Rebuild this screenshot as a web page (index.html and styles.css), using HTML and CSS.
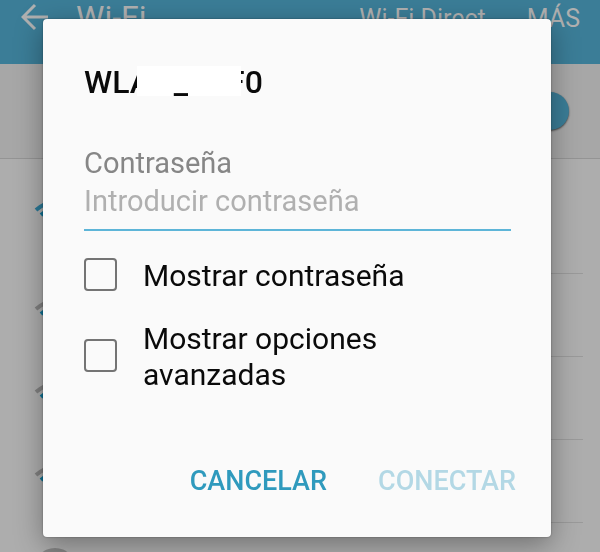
FILE: index.html
```html
<!DOCTYPE html>
<html lang="es">
<head>
    <meta charset="UTF-8">
    <meta name="viewport" content="width=device-width, initial-scale=1.0">
    <title>Wi-Fi</title>
    <link rel="stylesheet" href="styles.css">
</head>
<body>

<svg class="symbols" width="0" height="0">
    <symbol id="wifi" viewBox="0 0 42 34">
        <path class="wave-outer" d="M2 10 Q21 -6 40 10" />
        <path class="wave-inner" d="M7 15 Q21 3 35 15 M13 21 Q21 14 29 21" />
        <path class="wave-dot" d="M16 25 L21 31 L26 25 Q21 21 16 25 Z" />
    </symbol>
</svg>

<header class="topbar">
    <button class="back" aria-label="Atrás">
        <svg width="28" height="28" viewBox="0 0 28 28">
            <path d="M27 14 H3 M14 2 L2 14 L14 26" fill="none" stroke="currentColor" stroke-width="3" />
        </svg>
    </button>
    <h1>Wi-Fi</h1>
    <button class="action">Wi-Fi Direct</button>
    <button class="action">MÁS</button>
</header>

<div class="switch-row">
    <input type="checkbox" class="switch" aria-label="Wi-Fi" checked>
</div>

<ul class="networks">
    <li class="network strong connected"><svg width="42" height="34"><use href="#wifi" /></svg><span class="info"></span></li>
    <li class="network"><svg width="42" height="34"><use href="#wifi" /></svg><span class="info"></span></li>
    <li class="network"><svg width="42" height="34"><use href="#wifi" /></svg><span class="info"></span></li>
    <li class="network"><svg width="42" height="34"><use href="#wifi" /></svg><span class="info"></span></li>
    <li class="network"><span class="add"></span></li>
</ul>

<div class="overlay">
    <form class="dialog" role="dialog" aria-labelledby="ssid">
        <h2 class="ssid" id="ssid">
            <span>WLAN<span class="underscore">_</span></span>
            <span>F0</span>
            <span class="redacted"></span>
        </h2>

        <label class="field-label" for="password">Contraseña</label>
        <input class="field" type="password" id="password" placeholder="Introducir contraseña">

        <div class="option">
            <input type="checkbox" id="showPassword">
            <label for="showPassword">Mostrar contraseña</label>
        </div>
        <div class="option">
            <input type="checkbox" id="showAdvanced">
            <label for="showAdvanced">Mostrar opciones avanzadas</label>
        </div>

        <div class="buttons">
            <button type="button">CANCELAR</button>
            <button type="submit" disabled>CONECTAR</button>
        </div>
    </form>
</div>

</body>
</html>
```

FILE: styles.css
```css
* {
    box-sizing: border-box;
}

body {
    display: flex;
    flex-direction: column;
    margin: 0;
    height: 100vh;
    overflow: hidden;
    font-family: Roboto, sans-serif;
    background-color: #adadad;
}

h1, h2, ul {
    margin: 0;
    padding: 0;
}

button {
    padding: 0;
    border: none;
    background: none;
    font-family: inherit;
    cursor: pointer;
}

.symbols {
    position: absolute;
}

/* screen behind the dialog */
.topbar {
    flex: none;
    display: flex;
    align-items: flex-start;
    height: 64px;
    padding: 2px 20px 0 21px;
    background-color: #3b7d97;
    color: #b0b0b0;
}

.back {
    height: 30px;
    color: inherit;
}

.back svg {
    display: block;
}

.topbar h1 {
    flex: 1;
    margin-left: 27px;
    font-size: 32px;
    line-height: 30px;
    font-weight: 400;
}

.action {
    margin-left: 41px;
    color: inherit;
    font-size: 25px;
    line-height: 33px;
}

.switch-row {
    flex: none;
    display: flex;
    align-items: center;
    justify-content: flex-end;
    height: 95px;
    padding-right: 31px;
    border-bottom: 1px solid #949494;
    background-color: #a7a7a7;
}

.switch {
    appearance: none;
    width: 38px;
    height: 38px;
    margin: 0;
    border-radius: 50%;
    background-color: #3b7d97;
    box-shadow: 0 1px 2px rgba(0, 0, 0, 0.6);
}

.networks {
    flex: 1;
    min-height: 0;
    overflow: hidden;
    padding: 16px 17px 0 34px;
    list-style: none;
}

.network {
    display: flex;
    gap: 12px;
    height: 83px;
}

.network.connected {
    height: 99px;
}

.network svg, .add {
    flex: none;
    margin-top: 25px;
}

.info {
    flex: 1;
    border-bottom: 1px solid #9a9a9a;
}

.wave-outer, .wave-inner {
    fill: none;
    stroke: #0e7396;
    stroke-width: 4;
}

.wave-outer {
    stroke: var(--outer, #808080);
}

.wave-dot {
    fill: #0e7396;
}

.strong {
    --outer: #2a7896;
}

.add {
    width: 42px;
    height: 42px;
    border-radius: 50%;
    background-color: #858585;
}

/* dialog */
.overlay {
    position: fixed;
    inset: 0;
    display: flex;
    padding: 19px 49px 15px 43px;
}

.dialog {
    flex: 1;
    display: flex;
    flex-direction: column;
    padding: 44px 40px 36px 41px;
    border-radius: 4px;
    background-color: #fafafa;
    box-shadow: 0 0 2px rgba(0, 0, 0, 0.4), 0 8px 28px rgba(0, 0, 0, 0.35);
}

.ssid {
    position: relative;
    display: flex;
    gap: 39px;
    font-size: 32px;
    line-height: 38px;
    font-weight: 500;
    color: #0a0a0a;
}

.redacted {
    position: absolute;
    left: 53px;
    top: 3px;
    width: 104px;
    height: 30px;
    background-color: #fff;
}

/* stays visible over the redacted block */
.underscore {
    position: relative;
    z-index: 1;
}

.field-label {
    margin-top: 43px;
    font-size: 29px;
    line-height: 38px;
    color: #868686;
}

.field {
    height: 49px;
    padding: 0 0 9px;
    border: none;
    border-bottom: 2px solid #5db5d8;
    border-radius: 0;
    outline: none;
    background: none;
    font-family: inherit;
    font-size: 29px;
}

.field::placeholder {
    color: #b0b0b0;
}

.option {
    display: flex;
    align-items: center;
    gap: 26px;
    margin-top: 24px;
    font-size: 30px;
    line-height: 36px;
    color: #0a0a0a;
}

.option label {
    padding-top: 3px;
}

.option input {
    appearance: none;
    flex: none;
    width: 33px;
    height: 33px;
    margin: 0;
    border: 2px solid #747474;
    border-radius: 4px;
}

.buttons {
    display: flex;
    justify-content: flex-end;
    gap: 51px;
    margin-top: auto;
    margin-right: -5px;
}

.buttons button {
    font-size: 27px;
    line-height: 40px;
    font-weight: 500;
    color: #2f9abd;
}

.buttons button:disabled {
    color: #b3d8e5;
    cursor: default;
}
```
